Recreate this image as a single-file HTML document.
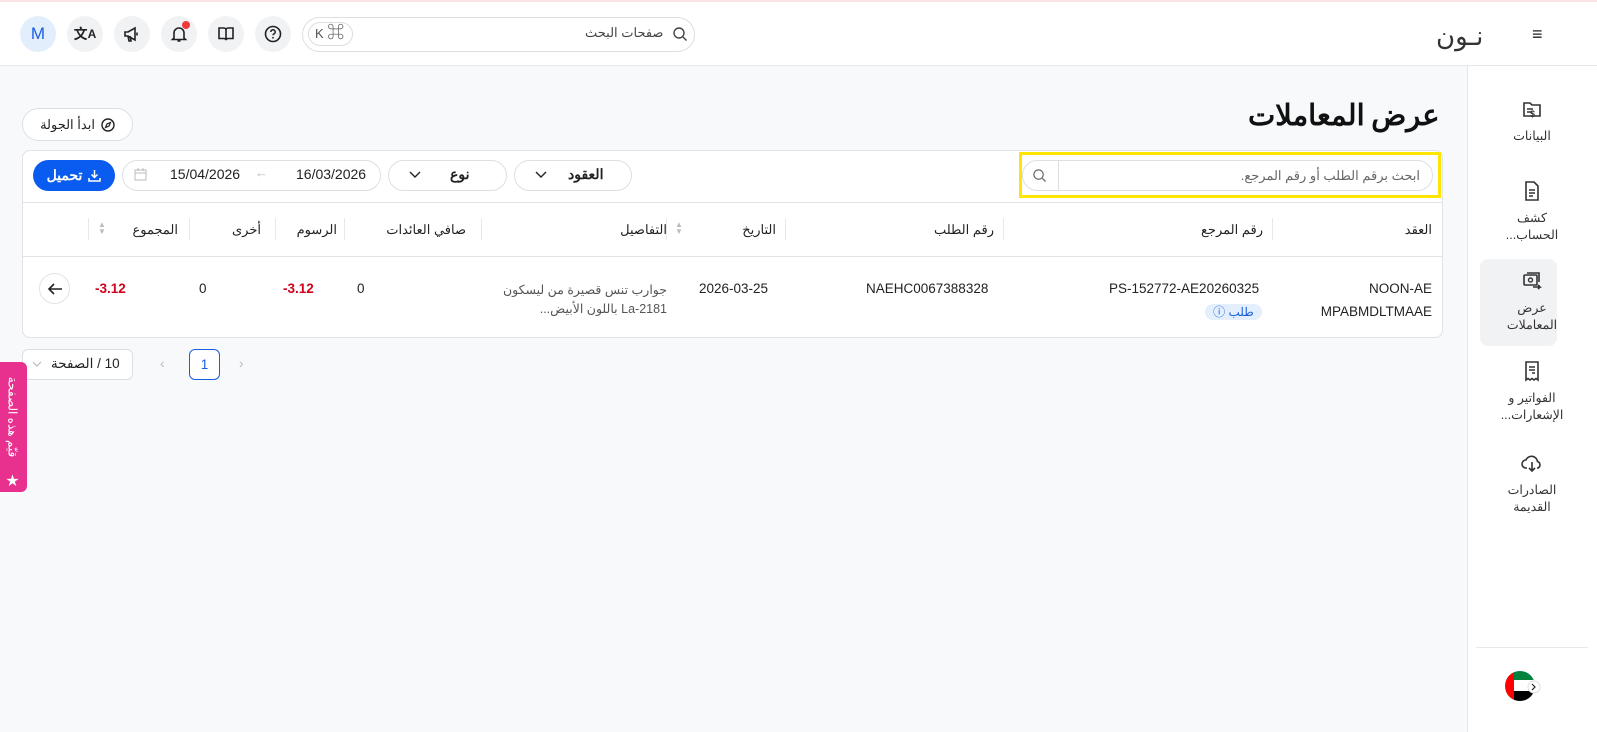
<!DOCTYPE html>
<html><head><meta charset="utf-8"><style>
*{box-sizing:border-box;margin:0;padding:0}
body{width:1597px;height:732px;overflow:hidden;background:#f8f9fb;font-family:"Liberation Sans","Noto Sans CJK SC",sans-serif;color:#222;position:relative;font-size:13px}
.a{position:absolute}
.hdr{left:0;top:0;width:1597px;height:66px;background:#fff;border-top:2px solid #fbe3e6;border-bottom:1px solid #e6e8ec}
.ib{width:36px;height:36px;border-radius:50%;background:#f1f2f4;display:flex;align-items:center;justify-content:center;top:16px}
.side{left:1467px;top:66px;width:130px;height:666px;background:#fff;border-left:1px solid #e3e7ee}
.si{width:130px;left:0;text-align:center;font-size:12.5px;color:#333;line-height:17px;direction:rtl}
.si svg{display:block;margin:0 auto 8px}
.card{left:22px;top:150px;width:1421px;height:188px;background:#fff;border:1px solid #e0e2e6;border-radius:8px}
.pill{border:1px solid #dcdfe4;border-radius:18px;background:#fff;height:32px}
.th{top:222px;font-size:13px;color:#222;direction:rtl}
.sep{width:1px;height:22px;background:#e8e8e8;top:218px}
.td{font-size:13.5px;color:#222}
.red{color:#d0021b;font-weight:bold}
</style></head><body>
<div class="a hdr"></div>
<div class="a" style="left:1532px;top:27px;font-size:18px;line-height:14px">≡</div>
<div class="a" style="left:1436px;top:16px;font-size:26px;color:#333;font-family:'Noto Sans CJK SC',sans-serif;direction:rtl;letter-spacing:1px">نـون</div>
<div class="a pill" style="left:302px;top:17px;width:393px;height:35px;border-radius:18px"></div>
<div class="a" style="left:585px;top:25px;font-size:13px;color:#444;direction:rtl">صفحات البحث</div>
<svg class="a" style="left:672px;top:26px" width="16" height="16" viewBox="0 0 16 16"><circle cx="7" cy="7" r="5" fill="none" stroke="#444" stroke-width="1.4"/><path d="M11 11l3.5 3.5" stroke="#444" stroke-width="1.4"/></svg>
<div class="a" style="left:308px;top:22px;width:45px;height:24px;border:1px solid #ddd;border-radius:12px;font-size:13px;color:#555;padding:3px 0 0 6px">K <span style="font-size:17px;line-height:14px">⌘</span></div>
<div class="a ib" style="left:255px"><svg width="18" height="18" viewBox="0 0 18 18"><circle cx="9" cy="9" r="7.5" fill="none" stroke="#222" stroke-width="1.6"/><path d="M6.8 7a2.2 2.2 0 1 1 3 2c-.6.3-.8.7-.8 1.3" fill="none" stroke="#222" stroke-width="1.5"/><circle cx="9" cy="12.8" r=".9" fill="#222"/></svg></div>
<div class="a ib" style="left:208px"><svg width="18" height="18" viewBox="0 0 18 18"><path d="M2 3h5a2 2 0 0 1 2 2v10a2 2 0 0 0-2-1.5H2zM16 3h-5a2 2 0 0 0-2 2v10a2 2 0 0 1 2-1.5h5z" fill="none" stroke="#222" stroke-width="1.6"/></svg></div>
<div class="a ib" style="left:161px"><svg width="18" height="18" viewBox="0 0 18 18"><path d="M4 13V8a5 5 0 0 1 10 0v5l1.5 1.5h-13z M7.5 16h3" fill="none" stroke="#222" stroke-width="1.6"/></svg></div>
<div class="a" style="left:182px;top:21px;width:8px;height:8px;border-radius:50%;background:#f03a3a"></div>
<div class="a ib" style="left:114px"><svg width="18" height="18" viewBox="0 0 18 18"><path d="M2 7h3l7-4v12l-7-4H2z M5 11l1 5h2l-1-5 M14 7.5v3" fill="none" stroke="#222" stroke-width="1.6"/></svg></div>
<div class="a ib" style="left:67px;font-size:14px;font-weight:bold;color:#222">文<span style="font-size:12px">A</span></div>
<div class="a ib" style="left:20px;background:#e3eefc;color:#1a5fe0;font-size:17px">M</div>

<div class="a side"></div>
<div class="a" style="left:1480px;top:259px;width:77px;height:87px;background:#f1f2f4;border-radius:8px"></div>
<div class="a" style="left:1467px;top:0">
 <div class="a si" style="top:98px"><svg width="22" height="22" viewBox="0 0 22 22"><path d="M3 5h6l2 2h8v11H3z M6 11h6 M6 14h5" fill="none" stroke="#333" stroke-width="1.6"/><text x="14" y="19" font-size="9" font-weight="bold" fill="#333">$</text></svg>البيانات</div>
 <div class="a si" style="top:180px"><svg width="22" height="22" viewBox="0 0 22 22"><path d="M5 2h8l4 4v14H5z M8 10h6 M8 13h6 M8 16h4" fill="none" stroke="#333" stroke-width="1.6"/></svg>كشف<br>الحساب...</div>
 <div class="a si" style="top:270px"><svg width="22" height="22" viewBox="0 0 22 22"><rect x="3" y="5" width="13" height="10" rx="1" fill="none" stroke="#333" stroke-width="1.6"/><path d="M6 3h12v9 M12 17h7l-2-2 M19 17l-2 2" fill="none" stroke="#333" stroke-width="1.6"/><circle cx="9.5" cy="10" r="2" fill="none" stroke="#333" stroke-width="1.4"/></svg>عرض<br>المعاملات</div>
 <div class="a si" style="top:360px"><svg width="22" height="22" viewBox="0 0 22 22"><path d="M5 2h12v18l-2-1.5-2 1.5-2-1.5-2 1.5-2-1.5-2 1.5z M8 7h6 M8 10h6 M11 13h3" fill="none" stroke="#333" stroke-width="1.6"/></svg>الفواتير و<br>الإشعارات...</div>
 <div class="a si" style="top:452px"><svg width="24" height="22" viewBox="0 0 24 22"><path d="M7 16H6a4 4 0 0 1 0-8 6 6 0 0 1 11.5 1.5A3.5 3.5 0 0 1 18 16h-1 M12 10v9 M9 16l3 3 3-3" fill="none" stroke="#333" stroke-width="1.6"/></svg>الصادرات<br>القديمة</div>
</div>
<div class="a" style="left:1476px;top:647px;width:112px;height:1px;background:#e6e8ec"></div>
<svg class="a" style="left:1505px;top:670px" width="36" height="32" viewBox="0 0 36 32"><defs><clipPath id="c"><circle cx="15" cy="16" r="15"/></clipPath></defs><g clip-path="url(#c)"><rect x="0" y="0" width="30" height="10" fill="#00843d"/><rect x="0" y="10" width="30" height="11" fill="#fff"/><rect x="0" y="21" width="30" height="11" fill="#000"/><rect x="0" y="0" width="9" height="32" fill="#f00"/></g><circle cx="29" cy="17" r="6" fill="#fff" stroke="#ddd"/><path d="M27 14l3 3-3 3" fill="none" stroke="#222" stroke-width="1.2"/></svg>

<div class="a" style="left:1248px;top:92px;font-size:29px;font-weight:bold;color:#111;direction:rtl;font-family:'Noto Sans CJK SC',sans-serif">عرض المعاملات</div>
<div class="a pill" style="left:22px;top:108px;width:111px;height:33px;display:flex;align-items:center;justify-content:center;gap:6px;font-size:13px;direction:rtl"><svg width="14" height="14" viewBox="0 0 14 14"><circle cx="7" cy="7" r="6" fill="none" stroke="#222" stroke-width="1.4"/><path d="M9.5 4.5L8 8 4.5 9.5 6 6z" fill="none" stroke="#222" stroke-width="1.2"/></svg>ابدأ الجولة</div>

<div class="a card"></div>
<div class="a" style="left:22px;top:202px;width:1421px;height:1px;background:#e3e3e3"></div>
<div class="a" style="left:22px;top:256px;width:1421px;height:1px;background:#e3e3e3"></div>
<div class="a" style="left:1019px;top:152px;width:422px;height:46px;border:3px solid #ffe500"></div>
<div class="a pill" style="left:1022px;top:160px;width:411px;height:31px"></div>
<div class="a" style="left:1058px;top:161px;width:1px;height:29px;background:#ddd"></div>
<svg class="a" style="left:1032px;top:168px" width="15" height="15" viewBox="0 0 16 16"><circle cx="7" cy="7" r="5" fill="none" stroke="#666" stroke-width="1.3"/><path d="M11 11l3.5 3.5" stroke="#666" stroke-width="1.3"/></svg>
<div class="a" style="left:1240px;top:168px;font-size:13px;color:#666;direction:rtl;width:180px;text-align:right">ابحث برقم الطلب أو رقم المرجع.</div>

<div class="a pill" style="left:514px;top:160px;width:118px;height:31px"></div>
<div class="a" style="left:568px;top:166px;font-size:14px;font-weight:bold;direction:rtl">العقود</div>
<svg class="a" style="left:535px;top:171px" width="12" height="8" viewBox="0 0 12 8"><path d="M1 1l5 5 5-5" fill="none" stroke="#222" stroke-width="1.4"/></svg>
<div class="a pill" style="left:388px;top:160px;width:119px;height:31px"></div>
<div class="a" style="left:450px;top:166px;font-size:14px;font-weight:bold">نوع</div>
<svg class="a" style="left:409px;top:171px" width="12" height="8" viewBox="0 0 12 8"><path d="M1 1l5 5 5-5" fill="none" stroke="#222" stroke-width="1.4"/></svg>
<div class="a pill" style="left:122px;top:160px;width:259px;height:31px"></div>
<div class="a" style="left:296px;top:166px;font-size:14px">16/03/2026</div>
<div class="a" style="left:255px;top:165px;font-size:13px;color:#bbb">←</div>
<div class="a" style="left:170px;top:166px;font-size:14px">15/04/2026</div>
<svg class="a" style="left:134px;top:168px" width="13" height="13" viewBox="0 0 13 13"><rect x="1" y="2" width="11" height="10" fill="none" stroke="#bbb"/><path d="M1 5h11 M4 0v3 M9 0v3" stroke="#bbb"/></svg>
<div class="a" style="left:33px;top:160px;width:82px;height:31px;border-radius:16px;background:#0a5cf0;color:#fff;font-size:14px;font-weight:bold;display:flex;align-items:center;justify-content:center;gap:6px;direction:rtl"><svg width="13" height="13" viewBox="0 0 13 13"><path d="M6.5 1v7 M3.5 5.5l3 3 3-3 M1 9v3h11V9" fill="none" stroke="#fff" stroke-width="1.5"/></svg>تحميل</div>

<div class="a th" style="right:165px">العقد</div>
<div class="a sep" style="left:1272px"></div>
<div class="a th" style="right:334px">رقم المرجع</div>
<div class="a sep" style="left:1003px"></div>
<div class="a th" style="right:603px">رقم الطلب</div>
<div class="a sep" style="left:785px"></div>
<div class="a th" style="right:821px">التاريخ</div>
<div class="a" style="left:675px;top:221px;font-size:8px;color:#bbb;line-height:7px">▲<br>▼</div>
<div class="a sep" style="left:666px"></div>
<div class="a th" style="right:930px">التفاصيل</div>
<div class="a sep" style="left:481px"></div>
<div class="a th" style="right:1131px">صافي العائدات</div>
<div class="a sep" style="left:344px"></div>
<div class="a th" style="right:1260px">الرسوم</div>
<div class="a sep" style="left:275px"></div>
<div class="a th" style="right:1336px">أخرى</div>
<div class="a sep" style="left:189px"></div>
<div class="a th" style="right:1419px">المجموع</div>
<div class="a" style="left:98px;top:221px;font-size:8px;color:#bbb;line-height:7px">▲<br>▼</div>
<div class="a sep" style="left:88px"></div>

<div class="a td" style="right:165px;top:277px;text-align:right;line-height:23px">NOON-AE<br>MPABMDLTMAAE</div>
<div class="a td" style="left:1109px;top:281px">PS-152772-AE20260325</div>
<div class="a" style="left:1205px;top:304px;width:57px;height:16px;border-radius:8px;background:#e3effd;color:#1a5fe0;font-size:12px;text-align:center;line-height:16px;direction:rtl">طلب ⓘ</div>
<div class="a td" style="left:866px;top:281px">NAEHC0067388328</div>
<div class="a td" style="left:699px;top:281px">2026-03-25</div>
<div class="a" style="right:930px;top:281px;font-size:12.5px;color:#555;direction:rtl;text-align:right;line-height:19px">جوارب تنس قصيرة من ليسكون<br>La-2181 باللون الأبيض...</div>
<div class="a td" style="left:357px;top:281px">0</div>
<div class="a td red" style="left:283px;top:281px">-3.12</div>
<div class="a td" style="left:199px;top:281px">0</div>
<div class="a td red" style="left:95px;top:281px">-3.12</div>
<div class="a" style="left:39px;top:273px;width:31px;height:31px;border-radius:50%;border:1px solid #e3e3e3;background:#fff;display:flex;align-items:center;justify-content:center"><svg width="16" height="14" viewBox="0 0 16 14"><path d="M15 7H2 M7 2L2 7l5 5" fill="none" stroke="#222" stroke-width="1.6"/></svg></div>

<div class="a" style="left:22px;top:349px;width:111px;height:31px;border:1px solid #dcdfe4;border-radius:6px;background:#fff"></div>
<svg class="a" style="left:32px;top:361px" width="10" height="7" viewBox="0 0 10 7"><path d="M1 1l4 4 4-4" fill="none" stroke="#bbb" stroke-width="1.2"/></svg>
<div class="a" style="left:51px;top:356px;font-size:13.5px;direction:rtl">10 / الصفحة</div>
<div class="a" style="left:160px;top:355px;font-size:14px;color:#bbb">‹</div>
<div class="a" style="left:189px;top:349px;width:31px;height:31px;border:1px solid #1a5fe0;border-radius:6px;background:#fff;color:#1a5fe0;font-size:13.5px;text-align:center;line-height:29px">1</div>
<div class="a" style="left:239px;top:355px;font-size:14px;color:#bbb">›</div>

<div class="a" style="left:0;top:362px;width:27px;height:130px;background:#e8308f;border-radius:0 6px 6px 0"></div>
<div class="a" style="left:-45px;top:410px;width:115px;transform:rotate(90deg);color:#fff;font-size:12px;text-align:center;direction:rtl;white-space:nowrap">قيّم هذه الصفحة</div>
<div class="a" style="left:6px;top:470px;color:#fff;font-size:13px">★</div>
</body></html>
